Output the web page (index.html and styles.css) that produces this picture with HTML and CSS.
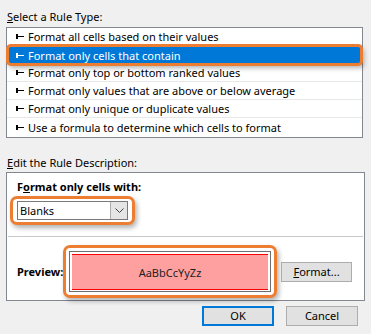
FILE: index.html
```html
<!DOCTYPE html>
<html lang="en">
<head>
  <meta charset="UTF-8">
  <title>New Formatting Rule</title>
  <link rel="stylesheet" href="styles.css">
</head>
<body>

  <div class="dialog">

    <!-- Rule type list -->
    <div class="group-label"><u>S</u>elect a Rule Type:</div>
    <div class="rule-list">
      <div class="rule-item"><span class="bullet"></span>Format all cells based on their values</div>
      <div class="rule-item selected"><span class="bullet"></span>Format only cells that contain</div>
      <div class="rule-item"><span class="bullet"></span>Format only top or bottom ranked values</div>
      <div class="rule-item"><span class="bullet"></span>Format only values that are above or below average</div>
      <div class="rule-item"><span class="bullet"></span>Format only unique or duplicate values</div>
      <div class="rule-item last"><span class="bullet"></span>Use a formula to determine which cells to format</div>
    </div>

    <!-- Rule description -->
    <div class="group-label desc-label"><u>E</u>dit the Rule Description:</div>
    <div class="desc-box">
      <div class="desc-title">F<u>o</u>rmat only cells with:</div>
      <div class="highlight combo-wrap">
        <div class="combo">
          <span class="combo-text">Blanks</span>
          <span class="combo-btn">
            <svg width="9" height="5" viewBox="0 0 9 5"><polyline points="0.5,0.5 4.5,4.5 8.5,0.5" fill="none" stroke="#444" stroke-width="1"/></svg>
          </span>
        </div>
      </div>

      <div class="preview-row">
        <div class="preview-label">Preview:</div>
        <div class="highlight preview-wrap">
          <div class="preview-frame">
            <div class="preview-fill">AaBbCcYyZz</div>
          </div>
        </div>
        <button class="btn format-btn"><u>F</u>ormat...</button>
      </div>
    </div>

    <!-- Dialog buttons -->
    <div class="dialog-buttons">
      <button class="btn default">OK</button>
      <button class="btn">Cancel</button>
    </div>

  </div>

</body>
</html>
```

FILE: styles.css
```css
/* General Reset */
* {
  margin: 0;
  padding: 0;
  box-sizing: border-box;
}

body {
  background-color: #f0f0f0;
  font-family: "Noto Sans", "Open Sans", sans-serif;
  font-size: 11px;
  color: #000;
  width: 371px;
  height: 334px;
  overflow: hidden;
}

.dialog {
  padding: 9px 0 0 6px;
}

.group-label {
  line-height: 16px;
  padding-left: 1px;
  margin-bottom: 2px;
}

/* Rule type list */
.rule-list {
  width: 357px;
  height: 111px;
  background-color: #fff;
  border: 1px solid #828790;
}

.rule-item {
  height: 18px;
  display: flex;
  align-items: center;
  padding-left: 9px;
  border-bottom: 1px solid #e8e8e8;
  white-space: nowrap;
}

.rule-item.last {
  border-bottom: none;
}

.bullet {
  position: relative;
  width: 8px;
  height: 5px;
  margin-right: 4px;
  flex-shrink: 0;
}

.bullet::before {
  content: "";
  position: absolute;
  left: 0;
  top: 0;
  width: 2px;
  height: 5px;
  background-color: currentColor;
}

.bullet::after {
  content: "";
  position: absolute;
  left: 0;
  top: 2px;
  width: 8px;
  height: 1px;
  background-color: currentColor;
}

.rule-item.selected {
  height: 16px;
  margin: 1px 2px;
  padding-left: 7px;
  border-bottom: none;
  background-color: #0078d7;
  color: #fff;
  border-radius: 2px;
  box-shadow: 0 0 0 3px #ed7d31, 2px 3px 5px 2px rgba(0, 0, 0, 0.3);
  position: relative;
}

/* Description box */
.desc-label {
  margin-top: 17px;
  margin-bottom: 1px;
}

.desc-box {
  width: 359px;
  height: 129px;
  background-color: #fff;
  border: 1px solid #828790;
  padding-top: 6px;
}

.desc-title {
  font-weight: bold;
  line-height: 16px;
  padding-left: 10px;
}

.highlight {
  border: 3px solid #ed7d31;
  border-radius: 7px;
  background-color: #fff;
  box-shadow: 2px 3px 5px rgba(0, 0, 0, 0.3);
}

.combo-wrap {
  display: inline-block;
  margin: 1px 0 0 3px;
  padding: 2px 4px;
}

.combo {
  width: 111px;
  height: 19px;
  border: 1px solid #7a7a7a;
  display: flex;
  align-items: center;
  justify-content: space-between;
  background-color: #fff;
}

.combo-text {
  padding-left: 2px;
}

.combo-btn {
  width: 17px;
  height: 17px;
  background-color: #e5e5e5;
  border-left: 1px solid #adadad;
  display: flex;
  align-items: center;
  justify-content: center;
}

/* Preview */
.preview-row {
  margin: 11px 1px 0;
  border-top: 1px solid #c8c8c8;
  padding-top: 8px;
  display: flex;
  align-items: center;
}

.preview-label {
  font-weight: bold;
  padding-left: 9px;
  width: 55px;
  flex-shrink: 0;
  white-space: nowrap;
}

.preview-wrap {
  padding: 3px;
  flex-shrink: 0;
}

.preview-frame {
  width: 202px;
  height: 41px;
  border: 1px solid #6d6d6d;
  padding: 2px 2px 1px;
}

.preview-fill {
  height: 100%;
  background-color: #ffa0a0;
  border-top: 1px solid #ff0000;
  border-bottom: 1px solid #ff0000;
  display: flex;
  align-items: center;
  justify-content: center;
  color: #222;
}

/* Buttons */
.btn {
  font-family: inherit;
  font-size: 11px;
  width: 72px;
  height: 20px;
  background-color: #e1e1e1;
  border: 1px solid #adadad;
  color: #000;
  line-height: 16px;
  flex-shrink: 0;
}

.format-btn {
  margin-left: 4px;
  width: 71px;
}

.dialog-buttons {
  display: flex;
  justify-content: flex-end;
  gap: 12px;
  padding: 5px 13px 0 0;
}

.btn.default {
  border: 2px solid #0078d7;
}
```
